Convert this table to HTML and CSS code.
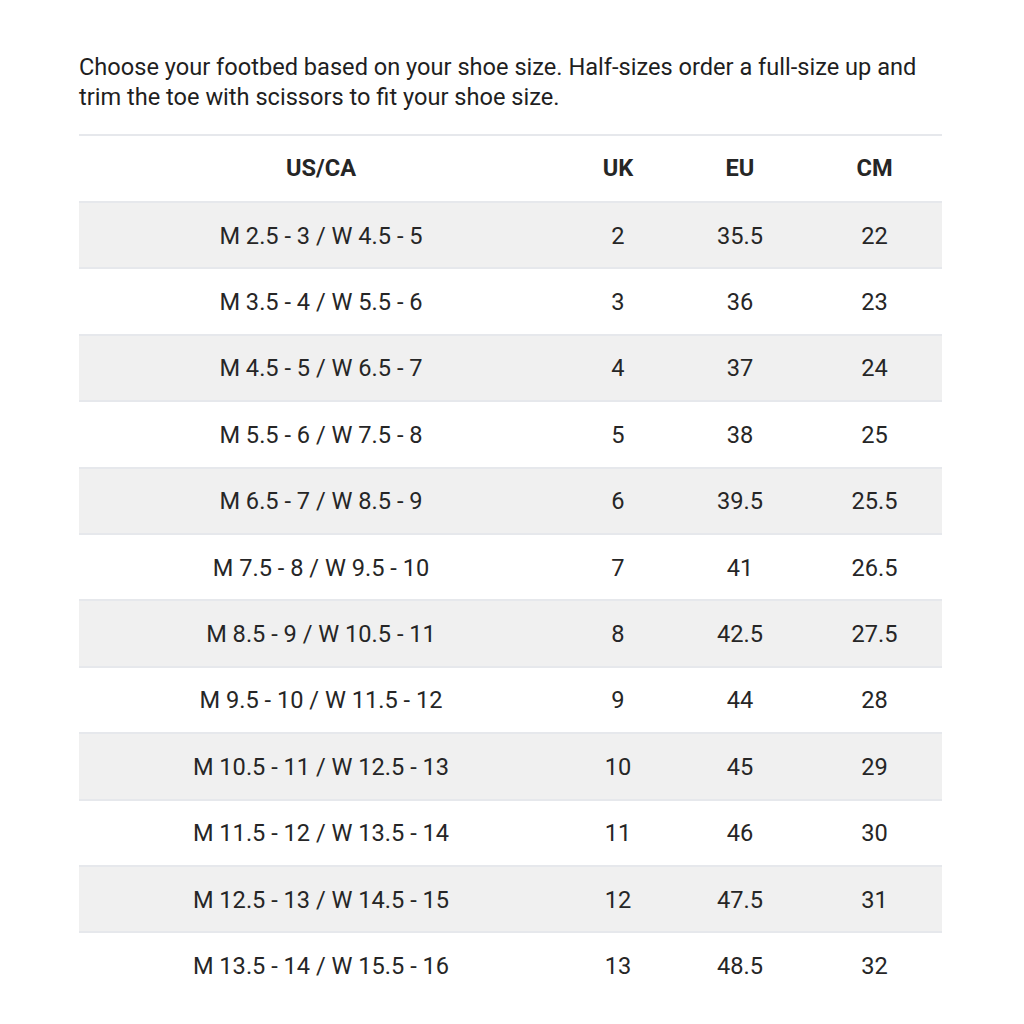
FILE: index.html
```html
<!DOCTYPE html>
<html lang="en">
<head>
<meta charset="utf-8">
<title>Footbed size chart</title>
<link rel="stylesheet" href="styles.css">
</head>
<body>
<main class="page">
  <p class="intro">Choose your footbed based on your shoe size. Half-sizes order a full-size up and trim the toe with scissors to fit your shoe size.</p>
  <table class="chart">
    <thead>
      <tr><th class="c-us">US/CA</th><th class="c-uk">UK</th><th class="c-eu">EU</th><th class="c-cm">CM</th></tr>
    </thead>
    <tbody>
      <tr><td>M 2.5 - 3 / W 4.5 - 5</td><td>2</td><td>35.5</td><td>22</td></tr>
      <tr><td>M 3.5 - 4 / W 5.5 - 6</td><td>3</td><td>36</td><td>23</td></tr>
      <tr><td>M 4.5 - 5 / W 6.5 - 7</td><td>4</td><td>37</td><td>24</td></tr>
      <tr><td>M 5.5 - 6 / W 7.5 - 8</td><td>5</td><td>38</td><td>25</td></tr>
      <tr><td>M 6.5 - 7 / W 8.5 - 9</td><td>6</td><td>39.5</td><td>25.5</td></tr>
      <tr><td>M 7.5 - 8 / W 9.5 - 10</td><td>7</td><td>41</td><td>26.5</td></tr>
      <tr><td>M 8.5 - 9 / W 10.5 - 11</td><td>8</td><td>42.5</td><td>27.5</td></tr>
      <tr><td>M 9.5 - 10 / W 11.5 - 12</td><td>9</td><td>44</td><td>28</td></tr>
      <tr><td>M 10.5 - 11 / W 12.5 - 13</td><td>10</td><td>45</td><td>29</td></tr>
      <tr><td>M 11.5 - 12 / W 13.5 - 14</td><td>11</td><td>46</td><td>30</td></tr>
      <tr><td>M 12.5 - 13 / W 14.5 - 15</td><td>12</td><td>47.5</td><td>31</td></tr>
      <tr><td>M 13.5 - 14 / W 15.5 - 16</td><td>13</td><td>48.5</td><td>32</td></tr>
    </tbody>
  </table>
</main>
</body>
</html>
```
FILE: styles.css
```css
html, body {
  margin: 0;
  padding: 0;
  background: #ffffff;
}
body {
  font-family: Roboto, "Liberation Sans", Arial, sans-serif;
  color: #212121;
}
.page {
  padding: 52px 70px 0 79px;
}
.intro {
  margin: 0 0 22px 0;
  font-size: 23.6px;
  line-height: 30px;
  color: #1f1f1f;
  max-width: 863px;
}
.chart {
  width: 863px;
  border-collapse: collapse;
  table-layout: fixed;
  border-top: 2px solid #e6e8ec;
}
.chart th,
.chart td {
  padding: 0;
  text-align: center;
  font-size: 23.6px;
  color: #262626;
}
.chart th {
  height: 64px;
  font-weight: 700;
  padding-bottom: 1px;
  border-bottom: 2px solid #e6e8ec;
}
.chart td {
  height: 63.4px;
  padding-top: 1px;
  border-bottom: 2px solid #e6e8ec;
}
.chart tbody tr:nth-child(odd) td {
  background: #f0f0f0;
}
.chart tbody tr:last-child td {
  border-bottom: none;
}
.c-us { width: 484px; }
.c-uk { width: 110px; }
.c-eu { width: 134px; }
.c-cm { width: 135px; }
```
